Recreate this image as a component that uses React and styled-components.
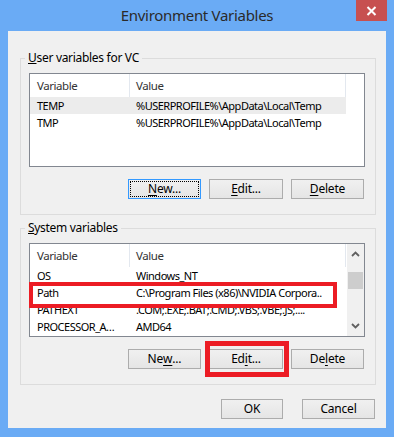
import React from "react";
import styled, { createGlobalStyle, css } from "styled-components";

const GlobalStyle = createGlobalStyle`
  html, body {
    margin: 0;
    padding: 0;
  }
  body {
    font-family: "Noto Sans", "Open Sans", "Liberation Sans", sans-serif;
    font-size: 11.5px;
    letter-spacing: -0.45px;
    color: #000;
  }
`;

const userVars = [
  { name: "TEMP", value: "%USERPROFILE%\\AppData\\Local\\Temp", selected: true },
  { name: "TMP", value: "%USERPROFILE%\\AppData\\Local\\Temp" },
];

const systemVars = [
  { name: "OS", value: "Windows_NT" },
  { name: "Path", value: "C:\\Program Files (x86)\\NVIDIA Corpora.." },
  { name: "PATHEXT", value: ".COM;.EXE;.BAT;.CMD;.VBS;.VBE;.JS;...." },
  { name: "PROCESSOR_A…", value: "AMD64" },
];

const Chevron = ({ down }) => (
  <svg width="9" height="6" viewBox="0 0 9 6">
    <polyline
      points={down ? "1,1 4.5,4.5 8,1" : "1,5 4.5,1.5 8,5"}
      fill="none"
      stroke="#606060"
      strokeWidth="1.8"
    />
  </svg>
);

const VarList = ({ rows, scroll, children }) => (
  <ListBox>
    <ListBody>
      <HeaderRow>
        <HeaderCell $w={100}>Variable</HeaderCell>
        <HeaderCell $w={216} $pad={6}>Value</HeaderCell>
      </HeaderRow>
      {rows.map((r) => (
        <Row key={r.name} $selected={r.selected}>
          <Cell $w={100}>{r.name}</Cell>
          <Cell $w={216} $pad={6}>{r.value}</Cell>
        </Row>
      ))}
    </ListBody>
    {scroll && (
      <ScrollBar>
        <ScrollArrow>
          <Chevron />
        </ScrollArrow>
        <Track>
          <Thumb />
        </Track>
        <ScrollArrow>
          <Chevron down />
        </ScrollArrow>
      </ScrollBar>
    )}
    {children}
  </ListBox>
);

const App = () => {
  return (
    <>
      <GlobalStyle />
      <Frame>
        <TitleBar>
          <Title>Environment Variables</Title>
          <CloseButton>
            <svg width="11" height="10" viewBox="0 0 11 10">
              <path d="M1.5 1 L9.5 9 M9.5 1 L1.5 9" stroke="#fff" strokeWidth="2" />
            </svg>
          </CloseButton>
        </TitleBar>
        <Client>
          <Group>
            <Legend>
              <u>U</u>ser variables for VC
            </Legend>
            <VarList rows={userVars} />
            <ButtonRow>
              <Button $w={73} $focused>
                <u>N</u>ew...
              </Button>
              <Button $w={74}>
                <u>E</u>dit...
              </Button>
              <Button $w={73}>
                <u>D</u>elete
              </Button>
            </ButtonRow>
          </Group>

          <Group $second>
            <Legend>
              <u>S</u>ystem variables
            </Legend>
            <VarList rows={systemVars} scroll>
              <RowMark />
            </VarList>
            <ButtonRow>
              <Button $w={73}>
                Ne<u>w</u>...
              </Button>
              <Marked>
                <Button $w={74}>
                  Ed<u>i</u>t...
                </Button>
                <ButtonMark />
              </Marked>
              <Button $w={73}>
                De<u>l</u>ete
              </Button>
            </ButtonRow>
          </Group>

          <Footer>
            <Button $w={62}>OK</Button>
            <Button $w={73}>Cancel</Button>
          </Footer>
        </Client>
      </Frame>
    </>
  );
};

const Frame = styled.div`
  width: 394px;
  height: 437px;
  box-sizing: border-box;
  background: #6aabf5;
  padding: 0 8px 9px 8px;
  display: flex;
  flex-direction: column;
`;

const TitleBar = styled.div`
  position: relative;
  height: 31px;
  display: flex;
  align-items: center;
  justify-content: center;
`;

const Title = styled.div`
  font-size: 15px;
  letter-spacing: -0.3px;
  color: #2a2a2a;
  margin-top: -1px;
`;

const CloseButton = styled.div`
  position: absolute;
  top: 0;
  right: -1px;
  width: 31px;
  height: 21px;
  background: #c75050;
  display: flex;
  align-items: center;
  justify-content: center;
`;

const Client = styled.div`
  flex: 1;
  background: #f0f0f0;
  padding: 19px 10px 0 12px;
  display: flex;
  flex-direction: column;
`;

const Group = styled.fieldset`
  margin: ${(p) => (p.$second ? "5px" : "0")} 0 0 0;
  padding: 7px 10px 15px 8px;
  border: 1px solid #dcdcdc;
  min-width: 0;
`;

const Legend = styled.legend`
  padding: 0 3px;
  margin-left: -4px;
  line-height: 16px;
  font-size: 12px;
  letter-spacing: -0.3px;
  color: #000;
`;

const ListBox = styled.div`
  position: relative;
  height: 94px;
  box-sizing: border-box;
  border: 1px solid #828790;
  background: #fff;
  display: flex;
  overflow: visible;
`;

const ListBody = styled.div`
  flex: 1;
  overflow: hidden;
`;

const HeaderRow = styled.div`
  display: flex;
  height: 23px;
  align-items: center;
`;

const HeaderCell = styled.div`
  width: ${(p) => p.$w}px;
  height: 100%;
  box-sizing: border-box;
  padding-left: ${(p) => p.$pad || 7}px;
  border-right: 1px solid #e3e8ef;
  color: #333;
  display: flex;
  align-items: center;
`;

const Row = styled.div`
  display: flex;
  width: 316px;
  height: 17px;
  align-items: center;
  ${(p) =>
    p.$selected &&
    css`
      background: #ececec;
    `}
`;

const Cell = styled.div`
  width: ${(p) => p.$w}px;
  box-sizing: border-box;
  padding-left: ${(p) => p.$pad || 7}px;
  font-size: 11px;
  letter-spacing: -0.5px;
  white-space: nowrap;
  overflow: hidden;
`;

const ScrollBar = styled.div`
  width: 17px;
  background: #f0f0f0;
  display: flex;
  flex-direction: column;
`;

const ScrollArrow = styled.div`
  height: 20px;
  display: flex;
  align-items: center;
  justify-content: center;
`;

const Track = styled.div`
  flex: 1;
  padding: 8px 1px 0 1px;
`;

const Thumb = styled.div`
  height: 17px;
  background: #cdcdcd;
`;

const RowMark = styled.div`
  position: absolute;
  left: -1px;
  top: 38px;
  width: 308px;
  height: 26px;
  box-sizing: border-box;
  border: 4px solid #ec1c24;
`;

const ButtonRow = styled.div`
  display: flex;
  justify-content: flex-end;
  gap: 8px;
  margin-top: 12px;
  padding-right: 1px;
`;

const Button = styled.div`
  position: relative;
  width: ${(p) => p.$w}px;
  height: 20px;
  box-sizing: border-box;
  border: 1px solid ${(p) => (p.$focused ? "#3399ff" : "#acacac")};
  background: linear-gradient(#f0f0f0, #e5e5e5);
  display: flex;
  align-items: center;
  justify-content: center;
  line-height: 1;
  font-size: 12px;
  letter-spacing: -0.2px;
  color: #000;

  u {
    text-underline-offset: 2px;
  }

  ${(p) =>
    p.$focused &&
    css`
      &::after {
        content: "";
        position: absolute;
        inset: 1px;
        border: 1px dotted #000;
      }
    `}
`;

const Marked = styled.div`
  position: relative;
`;

const ButtonMark = styled.div`
  position: absolute;
  left: -4px;
  top: -8px;
  width: 84px;
  height: 36px;
  box-sizing: border-box;
  border: 5px solid #ec1c24;
`;

const Footer = styled.div`
  display: flex;
  justify-content: flex-end;
  gap: 19px;
  margin-top: 14px;
  padding-right: 1px;
`;

export default App;
